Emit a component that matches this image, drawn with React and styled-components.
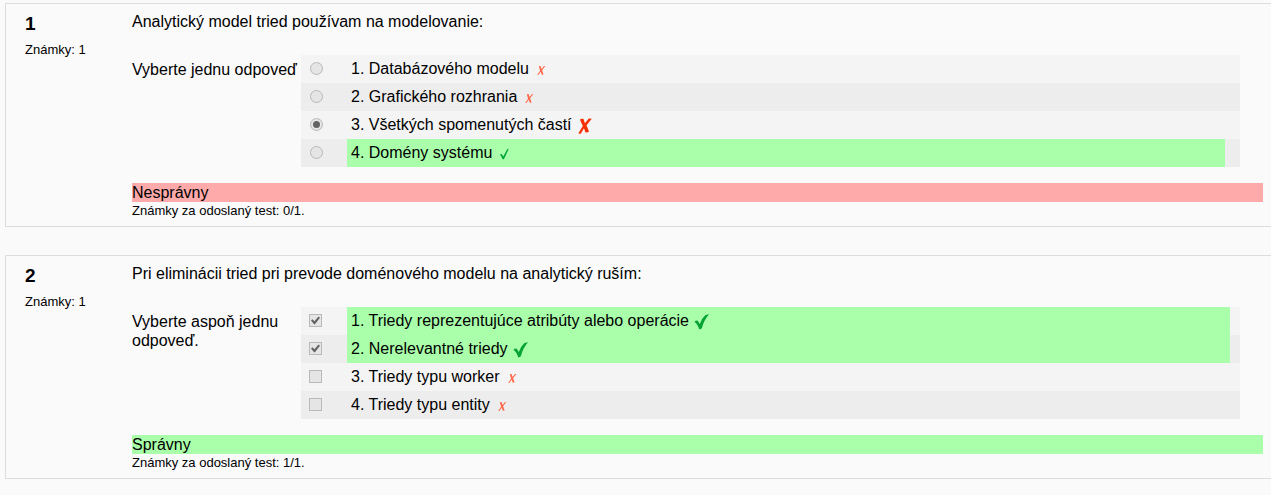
import React from "react";
import styled, { createGlobalStyle, css } from "styled-components";

const GlobalStyle = createGlobalStyle`
  *, *::before, *::after { box-sizing: border-box; }
  body {
    margin: 0;
    background: #fafafa;
    color: #000;
    font-family: "Liberation Sans", Arial, Helvetica, sans-serif;
    font-size: 16px;
    line-height: 19px;
  }
`;

const tones = { correct: "#aaffaa", incorrect: "#ffaaaa" };

const Page = styled.main`
  display: flex;
  flex-direction: column;
  gap: 28px;
  padding: 3px 0 16px 5px;
`;

const Question = styled.section`
  display: grid;
  grid-template-columns: 107px minmax(0, 1fr);
  padding: 8px 8px 6px 19px;
  border: 1px solid #ddd;
  border-right: 0;
`;

const Info = styled.header`
  display: flex;
  flex-direction: column;
  gap: 5px;
`;

const Number = styled.h2`
  margin: 0;
  font-size: 19px;
  line-height: 24px;
`;

const SmallText = styled.p`
  margin: 0;
  font-size: 13px;
  line-height: 18px;
`;

const Content = styled.div`
  min-width: 0;
`;

const Prompt = styled.p`
  margin: 0 0 24px;
`;

const AnswerBlock = styled.div`
  display: grid;
  grid-template-columns: 169px minmax(0, 1fr);
  margin-bottom: 16px;
  padding-right: 23px;
`;

const Instruction = styled.p`
  margin: 0;
  padding-top: 5px;
`;

const Options = styled.div`
  display: flex;
  flex-direction: column;
`;

const Option = styled.label`
  display: flex;
  align-items: flex-start;
  min-height: 28px;
  padding-right: ${(p) => p.$inset}px;
  background: #f4f4f4;
  &:nth-child(even) { background: #ededed; }
`;

const ControlCell = styled.span`
  display: flex;
  flex: 0 0 46px;
  padding: 7px 0 0 ${(p) => (p.$kind === "radio" ? 9 : 8)}px;
`;

const Control = styled.input`
  appearance: none;
  display: grid;
  place-items: center;
  width: 13px;
  height: 13px;
  margin: 0;
  border: 1px solid #b9b9b9;
  background: #e5e5e5;
  ${(p) =>
    p.type === "radio"
      ? css`
          border-radius: 50%;
          &:checked::before {
            content: "";
            width: 7px;
            height: 7px;
            border-radius: 50%;
            background: #636363;
          }
        `
      : css`
          &:checked::before {
            content: "";
            width: 9px;
            height: 9px;
            background: #636363;
            clip-path: polygon(0 50%, 16% 36%, 38% 58%, 84% 6%, 100% 20%, 44% 92%, 34% 92%);
          }
        `}
`;

const OptionText = styled.span`
  display: flex;
  flex: 1;
  align-items: flex-start;
  gap: 4px;
  min-height: 28px;
  padding: 4px;
  background: ${(p) => (p.$correct ? tones.correct : "transparent")};
`;

const Mark = styled.svg`
  flex: none;
  width: 16px;
  height: 16px;
  margin-top: 3px;
`;

const Result = styled.div`
  background: ${(p) => tones[p.$tone]};
`;

const marks = {
  cross: {
    color: "#ff6a4c",
    path: "M5.8 4.3 L7.6 4 L8.6 7 L11 4 L12.3 4 L9.1 8.2 L10.6 12.4 L8.8 12.7 L7.7 9.8 L5.4 13.1 L4.2 13.1 L7.1 8.7 Z",
  },
  bigCross: {
    color: "#f53005",
    path: "M3.9 1.4 Q5.4 .4 7.4 .8 L8.9 5.3 L12.8 .5 L15.8 .8 L10.5 7.3 L13 13.5 Q11.5 14.8 9.5 14.5 L8 10.2 L4.9 15.4 Q3.2 16 2.4 15.2 L6.8 7.9 Z",
  },
  tick: {
    color: "#00a33a",
    path: "M4.1 8.6 L5.7 8 L7.3 10.6 L11.2 3.2 L12.8 2.7 L7.9 13.3 L6.7 13.3 Z",
  },
  bigTick: {
    color: "#06a334",
    path: "M1.4 8 Q3 6.2 4.7 6.7 L6.8 10 Q9 4 12.5 1 L16 .3 Q10.9 6.2 8.8 14.3 Q7.4 15.7 6.1 15.2 Q4.6 9.8 1.4 8 Z",
  },
};

const questions = [
  {
    number: 1,
    prompt: "Analytický model tried používam na modelovanie:",
    instruction: "Vyberte jednu odpoveď",
    kind: "radio",
    inset: 15,
    options: [
      { text: "1. Databázového modelu", mark: "cross" },
      { text: "2. Grafického rozhrania", mark: "cross" },
      { text: "3. Všetkých spomenutých častí", mark: "bigCross", checked: true },
      { text: "4. Domény systému", mark: "tick", correct: true },
    ],
    tone: "incorrect",
    result: "Nesprávny",
    grade: "0/1.",
  },
  {
    number: 2,
    prompt: "Pri eliminácii tried pri prevode doménového modelu na analytický ruším:",
    instruction: "Vyberte aspoň jednu odpoveď.",
    kind: "checkbox",
    inset: 10,
    options: [
      { text: "1. Triedy reprezentujúce atribúty alebo operácie", mark: "bigTick", checked: true, correct: true },
      { text: "2. Nerelevantné triedy", mark: "bigTick", checked: true, correct: true },
      { text: "3. Triedy typu worker", mark: "cross" },
      { text: "4. Triedy typu entity", mark: "cross" },
    ],
    tone: "correct",
    result: "Správny",
    grade: "1/1.",
  },
];

function QuestionCard({ question: q }) {
  const labelId = `question-${q.number}`;
  return (
    <Question>
      <Info>
        <Number>{q.number}</Number>
        <SmallText>Známky: 1</SmallText>
      </Info>
      <Content>
        <Prompt id={labelId}>{q.prompt}</Prompt>
        <AnswerBlock>
          <Instruction>{q.instruction}</Instruction>
          <Options role={q.kind === "radio" ? "radiogroup" : "group"} aria-labelledby={labelId}>
            {q.options.map((o) => (
              <Option key={o.text} $inset={q.inset}>
                <ControlCell $kind={q.kind}>
                  <Control type={q.kind} name={labelId} defaultChecked={o.checked} disabled />
                </ControlCell>
                <OptionText $correct={o.correct}>
                  {o.text}
                  <Mark viewBox="0 0 16 16" aria-hidden="true">
                    <path d={marks[o.mark].path} fill={marks[o.mark].color} />
                  </Mark>
                </OptionText>
              </Option>
            ))}
          </Options>
        </AnswerBlock>
        <Result $tone={q.tone}>{q.result}</Result>
        <SmallText>Známky za odoslaný test: {q.grade}</SmallText>
      </Content>
    </Question>
  );
}

export default function App() {
  return (
    <>
      <GlobalStyle />
      <Page>
        {questions.map((q) => (
          <QuestionCard key={q.number} question={q} />
        ))}
      </Page>
    </>
  );
}
